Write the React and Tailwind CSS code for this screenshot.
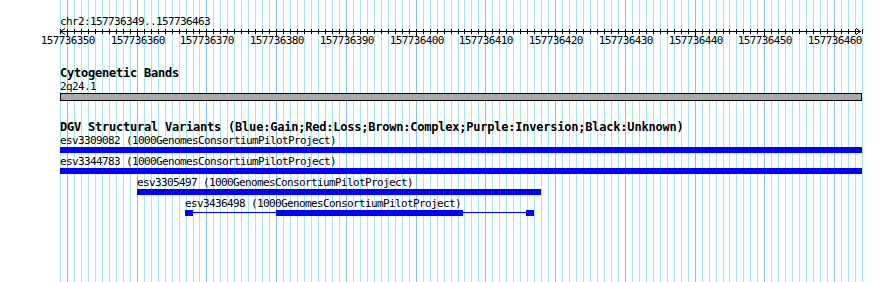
import React from "react";

// genome browser panel: chr2:157736349..157736463
const START = 157736349;
const BASES = 115;
const LEFT = 60;
const SPAN = 802;
const STEP = SPAN / BASES;

const gridXs = Array.from({ length: BASES + 1 }, (_, i) => Math.round(LEFT + i * STEP));

const mono = { fontFamily: '"DejaVu Sans Mono", "Liberation Mono", monospace' };

const Grid = () => (
  <svg className="absolute inset-0" width="890" height="282" shapeRendering="crispEdges">
    {gridXs.map((x, i) => (
      <line
        key={i}
        x1={x + 0.5}
        x2={x + 0.5}
        y1="0"
        y2="282"
        stroke={(START + i) % 10 === 0 ? "#88c2ec" : "#a8e6ee"}
        strokeWidth="1"
      />
    ))}
  </svg>
);

const Ruler = () => {
  const y = 3.5;
  return (
    <svg width="890" height="17" className="block" shapeRendering="crispEdges">
      <line x1={LEFT} x2={LEFT + SPAN - 1} y1={y} y2={y} stroke="#000" />
      {gridXs.map((x, i) => {
        const major = (START + i) % 10 === 0;
        return <line key={i} x1={x + 0.5} x2={x + 0.5} y1="1" y2={major ? 8 : 6} stroke="#000" />;
      })}
      <polyline points={`${LEFT + 5},0.5 ${LEFT + 0.5},3.5 ${LEFT + 5},6.5`} fill="none" stroke="#000" shapeRendering="auto" />
      <polyline points={`${LEFT + SPAN - 6},0.5 ${LEFT + SPAN - 1.5},3.5 ${LEFT + SPAN - 6},6.5`} fill="none" stroke="#000" shapeRendering="auto" />
      {gridXs.map((x, i) =>
        (START + i) % 10 === 0 ? (
          <text
            key={i}
            x={x + 0.8}
            y="15.5"
            textAnchor="middle"
            fontSize="11"
            letterSpacing="-0.62"
            fill="#000"
            style={mono}
          >
            {START + i}
          </text>
        ) : null
      )}
    </svg>
  );
};

const Label = ({ left, children, short }) => (
  <div
    className={
      short
        ? "h-[11px] text-[11px] leading-[11px] tracking-[-0.62px] text-black whitespace-pre"
        : "h-[13px] text-[11px] leading-[13px] tracking-[-0.62px] text-black whitespace-pre"
    }
    style={{ ...mono, marginLeft: left }}
  >
    {children}
  </div>
);

const Title = ({ children }) => (
  <div
    className="ml-[60px] h-[11px] text-[12px] leading-[11px] tracking-[-0.22px] font-bold text-black whitespace-pre"
    style={mono}
  >
    {children}
  </div>
);

export default function App() {
  return (
    <div className="relative w-[890px] h-[282px] bg-white overflow-hidden">
      <Grid />
      <div className="relative pt-[15px]">
        <Label left={60}>chr2:157736349..157736463</Label>
        <Ruler />

        {/* Cytogenetic Bands track */}
        <div className="mt-[23px] mb-[2px]">
          <Title>Cytogenetic Bands</Title>
        </div>
        <Label left={60} short>
          2q24.1
        </Label>
        <div className="mt-[1px] ml-[60px] w-[802px] h-[8px] border border-black bg-[#aaaaaa]" />

        {/* DGV track */}
        <div className="mt-[21px] mb-[1px]">
          <Title>DGV Structural Variants (Blue:Gain;Red:Loss;Brown:Complex;Purple:Inversion;Black:Unknown)</Title>
        </div>

        <Label left={60}>esv3309082 (1000GenomesConsortiumPilotProject)</Label>
        <div className="ml-[60px] w-[802px] h-[6px] bg-[#0000ff] mb-[2px]" />

        <Label left={60}>esv3344783 (1000GenomesConsortiumPilotProject)</Label>
        <div className="ml-[60px] w-[802px] h-[6px] bg-[#0000ff] mb-[2px]" />

        <Label left={137}>esv3305497 (1000GenomesConsortiumPilotProject)</Label>
        <div className="ml-[137px] w-[404px] h-[6px] bg-[#0000ff] mb-[2px]" />

        <Label left={185}>esv3436498 (1000GenomesConsortiumPilotProject)</Label>
        <div className="ml-[185px] flex items-start h-[6px]">
          <div className="w-[8px] h-[6px] bg-[#0000ff]" />
          <div className="w-[83px] h-px mt-[2px] bg-[#0000ff]" />
          <div className="w-[187px] h-[6px] bg-[#0000ff]" />
          <div className="w-[63px] h-px mt-[2px] bg-[#0000ff]" />
          <div className="w-[8px] h-[6px] bg-[#0000ff]" />
        </div>
      </div>
    </div>
  );
}
